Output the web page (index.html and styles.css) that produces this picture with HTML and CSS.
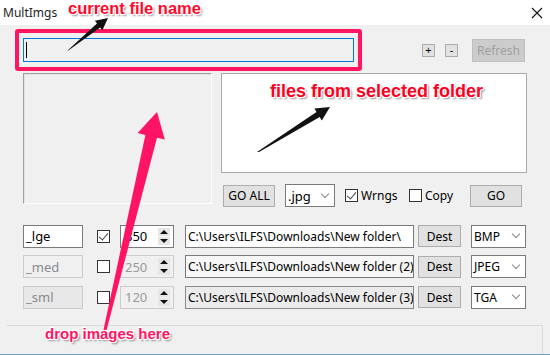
FILE: index.html
```html
<!DOCTYPE html>
<html lang="en">
<head>
    <meta charset="UTF-8">
    <title>MultImgs</title>
    <link rel="stylesheet" href="styles.css">
</head>
<body>
    <div class="window">
        <div class="titlebar">
            <span class="title">MultImgs</span>
            <svg class="close" width="12" height="12" viewBox="0 0 12 12">
                <path d="M1 1 L11 11 M11 1 L1 11" stroke="#111" stroke-width="1.1" fill="none"/>
            </svg>
        </div>

        <div class="top-row">
            <div class="highlight">
                <div class="current-file"><span class="caret"></span></div>
            </div>
            <button class="tiny">+</button>
            <button class="tiny minus">-</button>
            <button class="btn refresh" disabled>Refresh</button>
        </div>

        <div class="middle">
            <div class="drop-zone"></div>
            <div class="right-col">
                <div class="file-list"></div>
                <div class="controls">
                    <button class="btn go-all">GO ALL</button>
                    <div class="select ext"><span>.jpg</span><span class="chev"></span></div>
                    <label class="check wrngs"><span class="box checked"></span>Wrngs</label>
                    <label class="check copy"><span class="box"></span>Copy</label>
                    <button class="btn go">GO</button>
                </div>
            </div>
        </div>

        <div class="sizes">
            <div class="size-row">
                <div class="field name">_lge</div>
                <span class="box checked"></span>
                <div class="spin"><span>850</span><span class="arrows"><i class="up"></i><i class="down"></i></span></div>
                <div class="field path">C:\Users\ILFS\Downloads\New folder\</div>
                <button class="btn dest">Dest</button>
                <div class="select fmt"><span>BMP</span><span class="chev"></span></div>
            </div>
            <div class="size-row">
                <div class="field name off">_med</div>
                <span class="box"></span>
                <div class="spin off"><span>250</span><span class="arrows"><i class="up"></i><i class="down"></i></span></div>
                <div class="field path light">C:\Users\ILFS\Downloads\New folder (2)</div>
                <button class="btn dest">Dest</button>
                <div class="select fmt"><span>JPEG</span><span class="chev"></span></div>
            </div>
            <div class="size-row">
                <div class="field name off dark">_sml</div>
                <span class="box"></span>
                <div class="spin off"><span>120</span><span class="arrows"><i class="up"></i><i class="down"></i></span></div>
                <div class="field path grey">C:\Users\ILFS\Downloads\New folder (3)</div>
                <button class="btn dest">Dest</button>
                <div class="select fmt"><span>TGA</span><span class="chev"></span></div>
            </div>
        </div>

        <div class="status"></div>

        <!-- annotations drawn over the screenshot -->
        <svg class="arrows-layer" width="550" height="355" viewBox="0 0 550 355">
            <polygon fill="#111" points="67,51 69,50 100.2,27.5 102.4,30.2 108,18 94.9,20.8 97,23.5"/>
            <polygon fill="#111" points="257,152 259,152 319.7,117 321.8,120.4 330,107 314.4,108.5 316.5,111.9"/>
            <polygon fill="#ff1464" points="103.5,329.7 106.5,330.3 157,137.7 164.8,139.5 157,112 137.6,133.1 145.4,134.9"/>
        </svg>
        <div class="note note-file">current file name</div>
        <div class="note note-list">files from selected folder</div>
        <div class="note note-drop">drop images here</div>
    </div>
</body>
</html>
```

FILE: styles.css
```css
body {
    margin: 0;
    background-color: #f0f0f0;
    font-family: "Noto Sans", "Open Sans", sans-serif;
    font-size: 12px;
    color: #000;
}

.window {
    width: 550px;
    height: 355px;
    position: relative;
    overflow: hidden;
    background-color: #f0f0f0;
    box-sizing: border-box;
    border-bottom: 1px solid #6b9fc0;
}

.titlebar {
    height: 25px;
    background-color: #fff;
    display: flex;
    align-items: center;
    justify-content: space-between;
    padding: 0 7px 0 3px;
}

.title {
    font-size: 12px;
    color: #222;
}

.top-row {
    display: flex;
    align-items: center;
    height: 42px;
    margin-top: 4px;
}

.highlight {
    margin-left: 15px;
    width: 347px;
    box-sizing: border-box;
    border: 4px solid #ff1560;
    border-radius: 3px;
    padding: 5px 4px;
}

.current-file {
    height: 24px;
    box-sizing: border-box;
    border: 1px solid #0078d7;
    background-color: #f0f0f0;
    display: flex;
    align-items: center;
    padding-left: 2px;
}

.caret {
    width: 1px;
    height: 16px;
    background-color: #000;
}

button {
    font-family: inherit;
    font-size: 12px;
    color: #000;
    padding: 0;
    margin: 0;
}

.tiny {
    width: 13px;
    height: 13px;
    box-sizing: border-box;
    border: 1px solid #adadad;
    background-color: #e1e1e1;
    font-size: 11px;
    line-height: 10px;
    margin-left: 60px;
}

.tiny.minus {
    margin-left: 10px;
}

.btn {
    box-sizing: border-box;
    border: 1px solid #adadad;
    background-color: #e1e1e1;
    height: 23px;
}

.refresh {
    margin-left: 14px;
    width: 53px;
    background-color: #cccccc;
    border-color: #bfbfbf;
    color: #a0a0a0;
}

.middle {
    display: flex;
    margin-top: 2px;
}

.drop-zone {
    margin-left: 23px;
    width: 189px;
    height: 131px;
    box-sizing: border-box;
    border: 1px solid #fff;
    border-top-color: #a0a0a0;
    border-left-color: #a0a0a0;
    box-shadow: inset 1px 1px 0 #e3e3e3;
}

.right-col {
    margin-left: 9px;
    width: 306px;
}

.file-list {
    height: 100px;
    box-sizing: border-box;
    border: 1px solid #a9a9a9;
    background-color: #fff;
}

.controls {
    display: flex;
    align-items: center;
    margin-top: 11px;
    height: 23px;
}

.go-all {
    margin-left: 2px;
    width: 52px;
    height: 22px;
}

.select {
    box-sizing: border-box;
    height: 23px;
    border: 1px solid #7a7a7a;
    background-color: #fff;
    display: flex;
    align-items: center;
    justify-content: space-between;
    padding: 0 6px 0 2px;
}

.chev {
    width: 5px;
    height: 5px;
    border-right: 1px solid #888;
    border-bottom: 1px solid #888;
    transform: rotate(45deg);
    margin-top: -4px;
}

.ext {
    margin-left: 10px;
    width: 50px;
    font-size: 13px;
}

.check {
    display: flex;
    align-items: center;
    gap: 3px;
}

.wrngs {
    margin-left: 10px;
    width: 64px;
}

.copy {
    width: 61px;
}

.box {
    width: 13px;
    height: 13px;
    box-sizing: border-box;
    border: 1px solid #333;
    background-color: #fff;
    position: relative;
    flex: none;
}

.box.checked::after {
    content: "";
    position: absolute;
    left: 3px;
    top: 0;
    width: 4px;
    height: 8px;
    border-right: 1px solid #444;
    border-bottom: 1px solid #444;
    transform: rotate(40deg);
}

.go {
    width: 52px;
    height: 22px;
}

.sizes {
    display: flex;
    flex-direction: column;
    gap: 7.5px;
    margin-top: 17.5px;
}

.size-row {
    display: flex;
    align-items: center;
    height: 23px;
}

.field {
    box-sizing: border-box;
    height: 23px;
    border: 1px solid #7a7a7a;
    background-color: #fff;
    display: flex;
    align-items: center;
    padding-left: 2px;
    white-space: nowrap;
    overflow: hidden;
}

.name {
    margin-left: 23px;
    width: 60px;
    font-size: 13px;
}

.name.off {
    border-color: #cccccc;
    background-color: #f0f0f0;
    color: #8a8a8a;
}

.name.dark {
    background-color: #e8e8e8;
}

.size-row > .box {
    margin-left: 14px;
}

.spin {
    margin-left: 10px;
    width: 54px;
    height: 23px;
    box-sizing: border-box;
    border: 1px solid #7a7a7a;
    background-color: #fff;
    display: flex;
    align-items: center;
    justify-content: space-between;
    padding: 0 3px 0 4px;
    font-size: 13px;
}

.spin.off {
    border-color: #cccccc;
    background-color: #f0f0f0;
    color: #9a9a9a;
}

.arrows {
    display: flex;
    flex-direction: column;
    gap: 1px;
}

.arrows i {
    width: 12px;
    height: 8px;
    background-color: #e6e6e6;
    position: relative;
}

.arrows i::after {
    content: "";
    position: absolute;
    left: 2px;
    border-left: 4px solid transparent;
    border-right: 4px solid transparent;
}

.arrows .up::after {
    top: 2px;
    border-bottom: 4px solid #111;
}

.arrows .down::after {
    top: 2px;
    border-top: 4px solid #111;
}

.path {
    margin-left: 11px;
    width: 229px;
    font-size: 12px;
}

.path.light {
    background-color: #f7f7f7;
}

.path.grey {
    background-color: #ebebeb;
    border-color: #8a8a8a;
}

.dest {
    margin-left: 4px;
    width: 43px;
    height: 22px;
}

.fmt {
    margin-left: 10px;
    width: 55px;
}

.status {
    margin: 16px 0 0 7px;
    width: 536px;
    height: 31px;
    box-sizing: border-box;
    border-top: 1px solid #dadada;
    border-right: 1px solid #dadada;
}

.arrows-layer {
    position: absolute;
    left: 0;
    top: 0;
    pointer-events: none;
}

.note {
    position: absolute;
    font-family: "Liberation Sans", Arial, sans-serif;
    font-weight: bold;
    white-space: nowrap;
    text-shadow: -1px -1px 0 #fff, 1px -1px 0 #fff, -1px 1px 0 #fff, 1px 1px 0 #fff,
        2px 2px 2px rgba(0, 0, 0, 0.45);
}

.note-file {
    left: 68px;
    top: -1px;
    font-size: 16.5px;
    color: #ff0a2c;
}

.note-list {
    left: 270px;
    top: 81px;
    font-size: 18px;
    color: #ff0022;
}

.note-drop {
    left: 45px;
    top: 325px;
    font-size: 15px;
    color: #ff1464;
}
```
